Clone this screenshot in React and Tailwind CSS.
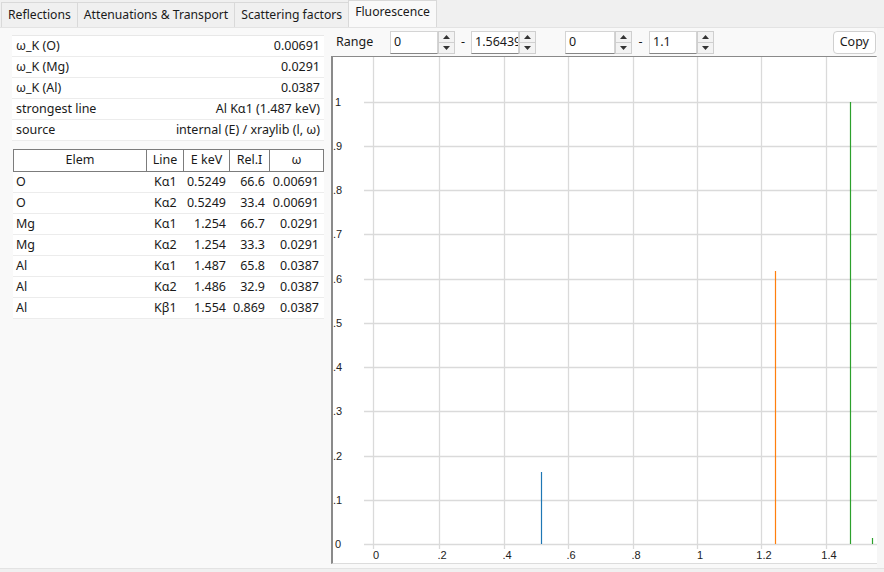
import React from 'react'

const FONT = { fontFamily: '"Noto Sans", "Segoe UI", sans-serif' }

const PROPS = [
  ['ω_K (O)', '0.00691'],
  ['ω_K (Mg)', '0.0291'],
  ['ω_K (Al)', '0.0387'],
  ['strongest line', 'Al Kα1 (1.487 keV)'],
  ['source', 'internal (E) / xraylib (l, ω)'],
]

const ROWS = [
  ['O', 'Kα1', '0.5249', '66.6', '0.00691'],
  ['O', 'Kα2', '0.5249', '33.4', '0.00691'],
  ['Mg', 'Kα1', '1.254', '66.7', '0.0291'],
  ['Mg', 'Kα2', '1.254', '33.3', '0.0291'],
  ['Al', 'Kα1', '1.487', '65.8', '0.0387'],
  ['Al', 'Kα2', '1.486', '32.9', '0.0387'],
  ['Al', 'Kβ1', '1.554', '0.869', '0.0387'],
]

const TABS = ['Reflections', 'Attenuations & Transport', 'Scattering factors']

// x ticks (local px in plot frame) and y ticks
const XT = [[40, '0'], [106, '.2'], [171, '.4'], [235, '.6'], [300, '.8'], [364, '1'], [428, '1.2'], [493, '1.4']]
const YT = [[45, '1'], [89, '.9'], [133, '.8'], [177, '.7'], [222, '.6'], [266, '.5'], [310, '.4'], [354, '.3'], [399, '.2'], [443, '.1'], [487, '0']]

const BARS = [
  { x: 208, top: 415, c: '#1f77b4' },
  { x: 442, top: 214, c: '#ff7f0e' },
  { x: 517, top: 45, c: '#2ca02c' },
  { x: 539, top: 481, c: '#2ca02c' },
]

function SpinBox({ value, w = 'w-[48px]' }) {
  return (
    <div className="flex h-[23px]">
      <div className={`${w} h-full bg-white border border-[#d4d4d4] border-b-[#868686] pl-[3px] flex items-center text-[12.5px] text-[#1a1a1a] overflow-hidden whitespace-nowrap`}>
        {value}
      </div>
      <div className="w-[17px] h-full flex flex-col">
        <div className="flex-1 border border-[#cfcfcf] bg-[#f3f3f3] flex items-center justify-center">
          <svg width="7" height="4" viewBox="0 0 7 4"><path d="M0 4 L3.5 0 L7 4Z" fill="#333" /></svg>
        </div>
        <div className="flex-1 border border-t-0 border-[#cfcfcf] bg-[#f3f3f3] flex items-center justify-center">
          <svg width="7" height="4" viewBox="0 0 7 4"><path d="M0 0 L3.5 4 L7 0Z" fill="#333" /></svg>
        </div>
      </div>
    </div>
  )
}

function Plot() {
  return (
    <svg width="544" height="506" className="block" style={{ fontFamily: '"Liberation Sans", Arial, sans-serif' }}>
      <rect width="544" height="506" fill="#fff" />
      {XT.map(([x]) => (
        <line key={'v' + x} x1={x + 0.5} y1={0} x2={x + 0.5} y2={492} stroke="#dadada" strokeWidth="1.3" />
      ))}
      {YT.map(([y]) => (
        <line key={'h' + y} x1={31} y1={y + 0.5} x2={544} y2={y + 0.5} stroke="#dadada" strokeWidth="1.3" />
      ))}
      {YT.map(([y, t]) => (
        <text key={'yl' + y} x={t.startsWith('.') ? 0 : 2} y={y + 4} fontSize="11" fill="#222">{t}</text>
      ))}
      {XT.map(([x, t]) => (
        <text key={'xl' + x} x={x + 3} y={502} fontSize="11" fill="#222" textAnchor="middle">{t}</text>
      ))}
      {BARS.map((b, i) => (
        <line key={i} x1={b.x + 0.5} y1={b.top} x2={b.x + 0.5} y2={487} stroke={b.c} strokeWidth="1.2" />
      ))}
    </svg>
  )
}

export default function App() {
  return (
    <div className="w-[884px] h-[572px] bg-[#f0f0f0] overflow-hidden text-[12.5px] text-[#1a1a1a]" style={FONT}>
      {/* tab strip */}
      <div className="h-[27px] flex items-end pl-[1px] text-[12.2px]">
        {TABS.map(t => (
          <div key={t} className="h-[25px] px-[6px] flex items-center border border-b-0 border-[#d9d9d9] bg-[#f0f0f0] -mr-px whitespace-nowrap">
            {t}
          </div>
        ))}
        <div className="h-[27px] px-[6px] flex items-center border border-b-0 border-[#d9d9d9] bg-[#f9f9f9] whitespace-nowrap pb-[3px]">
          Fluorescence
        </div>
      </div>

      {/* page */}
      <div className="h-[542px] bg-[#f9f9f9] border-t border-b border-[#e3e3e3] flex">
        {/* left pane */}
        <div className="w-[331px] shrink-0 pl-[12px] pr-[7px] pt-[7px]">
          <div className="border-t border-[#e8e8e8]">
            {PROPS.map(([k, v]) => (
              <div key={k} className="h-[21px] bg-white border-b border-[#ececec] flex items-center justify-between px-[4px] pt-[1px] whitespace-nowrap">
                <span>{k}</span>
                <span>{v}</span>
              </div>
            ))}
          </div>

          <div className="mt-[8px] ml-[1px]">
            <div className="h-[23px] flex border border-[#7c7c7c] bg-white">
              <div className="w-[133px] border-r border-[#7c7c7c] flex items-center justify-center">Elem</div>
              <div className="w-[37px] border-r border-[#7c7c7c] flex items-center justify-center">Line</div>
              <div className="w-[46px] border-r border-[#7c7c7c] flex items-center justify-center">E keV</div>
              <div className="w-[40px] border-r border-[#7c7c7c] flex items-center justify-center">Rel.I</div>
              <div className="flex-1 flex items-center justify-center">ω</div>
            </div>
            {ROWS.map((r, i) => (
              <div key={i} className="h-[21px] flex bg-white border-b border-[#ececec] whitespace-nowrap">
                <div className="w-[134px] pl-[3px] flex items-center">{r[0]}</div>
                <div className="w-[37px] pl-[7px] flex items-center">{r[1]}</div>
                <div className="w-[46px] pr-[4px] flex items-center justify-end">{r[2]}</div>
                <div className="w-[40px] pr-[5px] flex items-center justify-end">{r[3]}</div>
                <div className="flex-1 pr-[5px] flex items-center justify-end">{r[4]}</div>
              </div>
            ))}
          </div>
        </div>

        {/* right pane */}
        <div className="w-[546px] shrink-0 flex flex-col">
          <div className="h-[28px] flex items-center pl-[5px] pt-[1px]">
            <span className="w-[54px]">Range</span>
            <SpinBox value="0" />
            <span className="w-[16px] text-center">-</span>
            <SpinBox value="1.56439" />
            <span className="w-[29px]" />
            <SpinBox value="0" w="w-[50px]" />
            <span className="w-[17px] text-center">-</span>
            <SpinBox value="1.1" />
            <div className="ml-auto mr-[1px] h-[23px] px-[6px] flex items-center bg-white border border-[#d0d0d0] rounded-[4px]">
              Copy
            </div>
          </div>
          <div className="h-[508px] border-l-2 border-t border-[#8a8a8a] border-r border-r-[#dcdcdc] border-b border-b-[#dcdcdc]">
            <Plot />
          </div>
        </div>
        <div className="flex-1 bg-[#f6f6f6]" />
      </div>
    </div>
  )
}
